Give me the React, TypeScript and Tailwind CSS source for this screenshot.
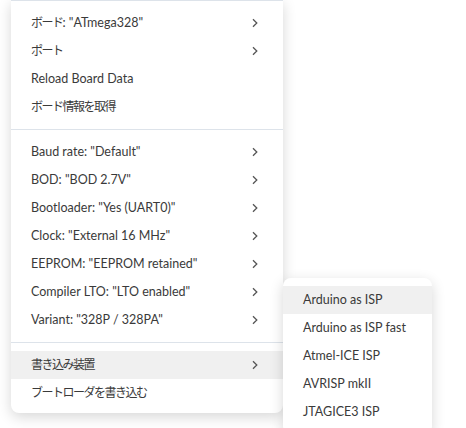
import type { ReactNode } from "react";

type MenuItem = {
  label: string;
  sub?: boolean;
  active?: boolean;
};

const font = { fontFamily: 'Lato, "Noto Sans CJK JP", sans-serif' };

const groups: MenuItem[][] = [
  [
    { label: 'ボード: "ATmega328"', sub: true },
    { label: "ポート", sub: true },
    { label: "Reload Board Data" },
    { label: "ボード情報を取得" },
  ],
  [
    { label: 'Baud rate: "Default"', sub: true },
    { label: 'BOD: "BOD 2.7V"', sub: true },
    { label: 'Bootloader: "Yes (UART0)"', sub: true },
    { label: 'Clock: "External 16 MHz"', sub: true },
    { label: 'EEPROM: "EEPROM retained"', sub: true },
    { label: 'Compiler LTO: "LTO enabled"', sub: true },
    { label: 'Variant: "328P / 328PA"', sub: true },
  ],
  [
    { label: "書き込み装置", sub: true, active: true },
    { label: "ブートローダを書き込む" },
  ],
];

const programmers = [
  "Arduino as ISP",
  "Arduino as ISP fast",
  "Atmel-ICE ISP",
  "AVRISP mkII",
  "JTAGICE3 ISP",
];

// Japanese runs get tighter spacing so they sit closer to the narrow UI font of the original
function Label({ text }: { text: string }) {
  const parts = text.split(/([\u3000-\u9fff\uff00-\uffef]+)/).filter(Boolean);
  return (
    <span className="whitespace-nowrap">
      {parts.map((part, i) =>
        /[\u3000-\u9fff\uff00-\uffef]/.test(part) ? (
          <span key={i} className="text-[12px] tracking-[-1.5px]">
            {part}
          </span>
        ) : (
          <span key={i}>{part}</span>
        ),
      )}
    </span>
  );
}

function Chevron() {
  return (
    <svg width="6" height="10" viewBox="0 0 6 10" className="shrink-0">
      <path d="M1 1.2 L4.8 5 L1 8.8" fill="none" stroke="#555" strokeWidth="1.3" />
    </svg>
  );
}

function Row({ children, active, sub }: { children: ReactNode; active?: boolean; sub?: boolean }) {
  return (
    <div
      className={`flex h-[28px] items-center justify-between pl-5 pr-[25px] text-[12.5px] text-[#3a3a3a] ${
        active ? "bg-[#f0f0f0]" : ""
      }`}
    >
      {children}
      {sub && <Chevron />}
    </div>
  );
}

function Separator() {
  return <div className="my-2 h-px bg-[#dde3ea]" />;
}

export default function App() {
  return (
    <div className="relative h-[428px] w-[466px] overflow-hidden bg-white" style={font}>
      <div className="ml-[11px] w-[272px] rounded-b-lg border-t border-[#dde3ea] bg-white pt-2 pb-1.5 shadow-[0_4px_14px_rgba(0,0,0,0.16)]">
        {groups.map((group, i) => (
          <div key={i}>
            {i > 0 && <Separator />}
            {group.map((item) => (
              <Row key={item.label} active={item.active} sub={item.sub}>
                <Label text={item.label} />
              </Row>
            ))}
          </div>
        ))}
      </div>

      <div className="absolute left-[283px] top-[278px] w-[149px] rounded-lg bg-white pt-2 pb-2 shadow-[0_4px_14px_rgba(0,0,0,0.16)]">
        {programmers.map((name, i) => (
          <Row key={name} active={i === 0}>
            <Label text={name} />
          </Row>
        ))}
      </div>
    </div>
  );
}
